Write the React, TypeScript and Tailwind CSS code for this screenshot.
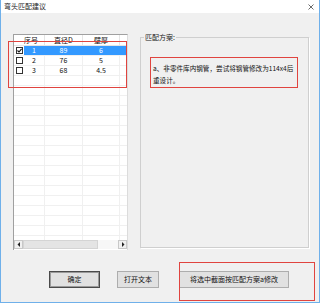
import React from 'react'

const rows = [
  { no: '1', d: '89', t: '6', checked: true },
  { no: '2', d: '76', t: '5', checked: false },
  { no: '3', d: '68', t: '4.5', checked: false },
]

function CheckBox({ checked }: { checked: boolean }) {
  return (
    <div className="w-[7px] h-[7px] border border-[#333] bg-white flex items-center justify-center">
      {checked && (
        <svg width="5" height="5" viewBox="0 0 5 5">
          <path d="M0.5 2.5 L2 4 L4.6 0.8" stroke="#111" strokeWidth="1.1" fill="none" />
        </svg>
      )}
    </div>
  )
}

function Button({ label, primary, w }: { label: string; primary?: boolean; w: string }) {
  return (
    <button
      className={`${w} h-[17px] text-[7px] leading-none text-[#111] bg-[#e1e1e1] flex items-center justify-center ${
        primary ? 'border border-[#4a4a4a] shadow-[inset_0_0_0_1px_#9a9a9a]' : 'border border-[#adadad]'
      }`}
    >
      {label}
    </button>
  )
}

export default function App() {
  const empty = Array.from({ length: 17 })

  return (
    <div className="relative w-[320px] h-[303px] bg-[#f0f0f0] border-x border-b border-[#6fb0ea] flex flex-col overflow-hidden font-['Noto_Sans_CJK_SC','Liberation_Sans',sans-serif] text-[#111]">
      {/* Title bar */}
      <div className="h-[13px] bg-white flex items-center justify-between pl-[3px] pr-[5px] shrink-0">
        <span className="text-[7px] leading-none text-[#222]">弯头匹配建议</span>
        <svg width="6" height="6" viewBox="0 0 6 6">
          <path d="M0.5 0.5 L5.5 5.5 M5.5 0.5 L0.5 5.5" stroke="#444" strokeWidth="0.8" />
        </svg>
      </div>

      {/* Body */}
      <div className="flex gap-[12px] pl-[12px] pt-[21px]">
        {/* Table */}
        <div className="w-[115px] h-[216px] bg-white border-l border-t border-[#a0a0a0] border-r-[#dcdcdc] border-r flex flex-col overflow-hidden">
          <div className="flex-1 overflow-hidden">
            <div className="flex h-[11px] border-b border-[#e5e5e5] text-[7px] leading-none">
              <div className="w-[31px] border-r border-[#e5e5e5] flex items-center justify-center pl-[4px]">序号</div>
              <div className="w-[38px] border-r border-[#e5e5e5] flex items-center justify-center">直径D</div>
              <div className="w-[37px] border-r border-[#e5e5e5] flex items-center justify-center">壁厚</div>
              <div className="flex-1" />
            </div>
            {rows.map((r) => (
              <div key={r.no} className="flex h-[10px] border-b border-[#f0f0f0] text-[7px] leading-none">
                <div className="w-[10px] flex items-center justify-center">
                  <CheckBox checked={r.checked} />
                </div>
                <div className={`flex-1 flex ${r.checked ? 'bg-[#3399ff] text-white' : ''}`}>
                  <div className={`w-[21px] flex items-center justify-center border-r ${r.checked ? 'border-[#3399ff]' : 'border-[#f0f0f0]'}`}>{r.no}</div>
                  <div className={`w-[38px] flex items-center justify-center border-r ${r.checked ? 'border-[#3399ff]' : 'border-[#f0f0f0]'}`}>{r.d}</div>
                  <div className={`w-[37px] flex items-center justify-center border-r ${r.checked ? 'border-[#3399ff]' : 'border-[#f0f0f0]'}`}>{r.t}</div>
                  <div className="flex-1" />
                </div>
              </div>
            ))}
            {empty.map((_, i) => (
              <div key={i} className="flex h-[10px] border-b border-[#f0f0f0]">
                <div className="w-[31px] border-r border-[#f0f0f0]" />
                <div className="w-[38px] border-r border-[#f0f0f0]" />
                <div className="w-[37px] border-r border-[#f0f0f0]" />
                <div className="flex-1" />
              </div>
            ))}
          </div>
          {/* Horizontal scrollbar */}
          <div className="h-[9px] flex shrink-0 bg-[#f0f0f0] mb-[1px]">
            <div className="w-[9px] h-[9px] border border-[#c8c8c8] bg-[#f0f0f0] flex items-center justify-center">
              <svg width="4" height="5" viewBox="0 0 4 5"><path d="M3 0 L0.5 2.5 L3 5 Z" fill="#222" /></svg>
            </div>
            <div className="w-[75px] h-[9px] bg-[#e4e4e4] border border-[#d4d4d4]" />
            <div className="flex-1 bg-[#f7f7f7]" />
            <div className="w-[9px] h-[9px] border border-[#c8c8c8] bg-[#f0f0f0] flex items-center justify-center">
              <svg width="4" height="5" viewBox="0 0 4 5"><path d="M1 0 L3.5 2.5 L1 5 Z" fill="#222" /></svg>
            </div>
          </div>
        </div>

        {/* Group box */}
        <div className="relative w-[169px] h-[216px] mt-[-1px]">
          <div className="absolute inset-x-0 top-[4px] bottom-[1px] border border-[#cfcfcf] shadow-[1px_1px_0_#ffffff]" />
          <div className="absolute left-[4px] top-0 px-[1px] bg-[#f0f0f0] text-[7px] leading-[8px] text-[#222]">匹配方案:</div>
          <div className="relative pt-[29px] pl-[13px] pr-[12px] text-[6.6px] leading-[12px] text-[#111]">
            a、非零件库内钢管，尝试将钢管修改为114x4后
            <br />
            重设计。
          </div>
        </div>
      </div>

      {/* Buttons */}
      <div className="flex pl-[48px] gap-[17px] mt-[21px]">
        <Button label="确定" primary w="w-[51px]" />
        <Button label="打开文本" w="w-[42px]" />
        <div className="ml-[3px]">
          <Button label="将选中截面按匹配方案a修改" w="w-[110px]" />
        </div>
      </div>

      {/* Red annotation boxes */}
      <div className="absolute left-[7px] top-[41px] w-[119px] h-[47px] border-[1.5px] border-[#e0443f]" />
      <div className="absolute left-[149px] top-[57px] w-[148px] h-[31px] border-[1.5px] border-[#e0443f]" />
      <div className="absolute left-[178px] top-[262px] w-[136px] h-[39px] border-[1.5px] border-[#e0443f]" />
    </div>
  )
}
